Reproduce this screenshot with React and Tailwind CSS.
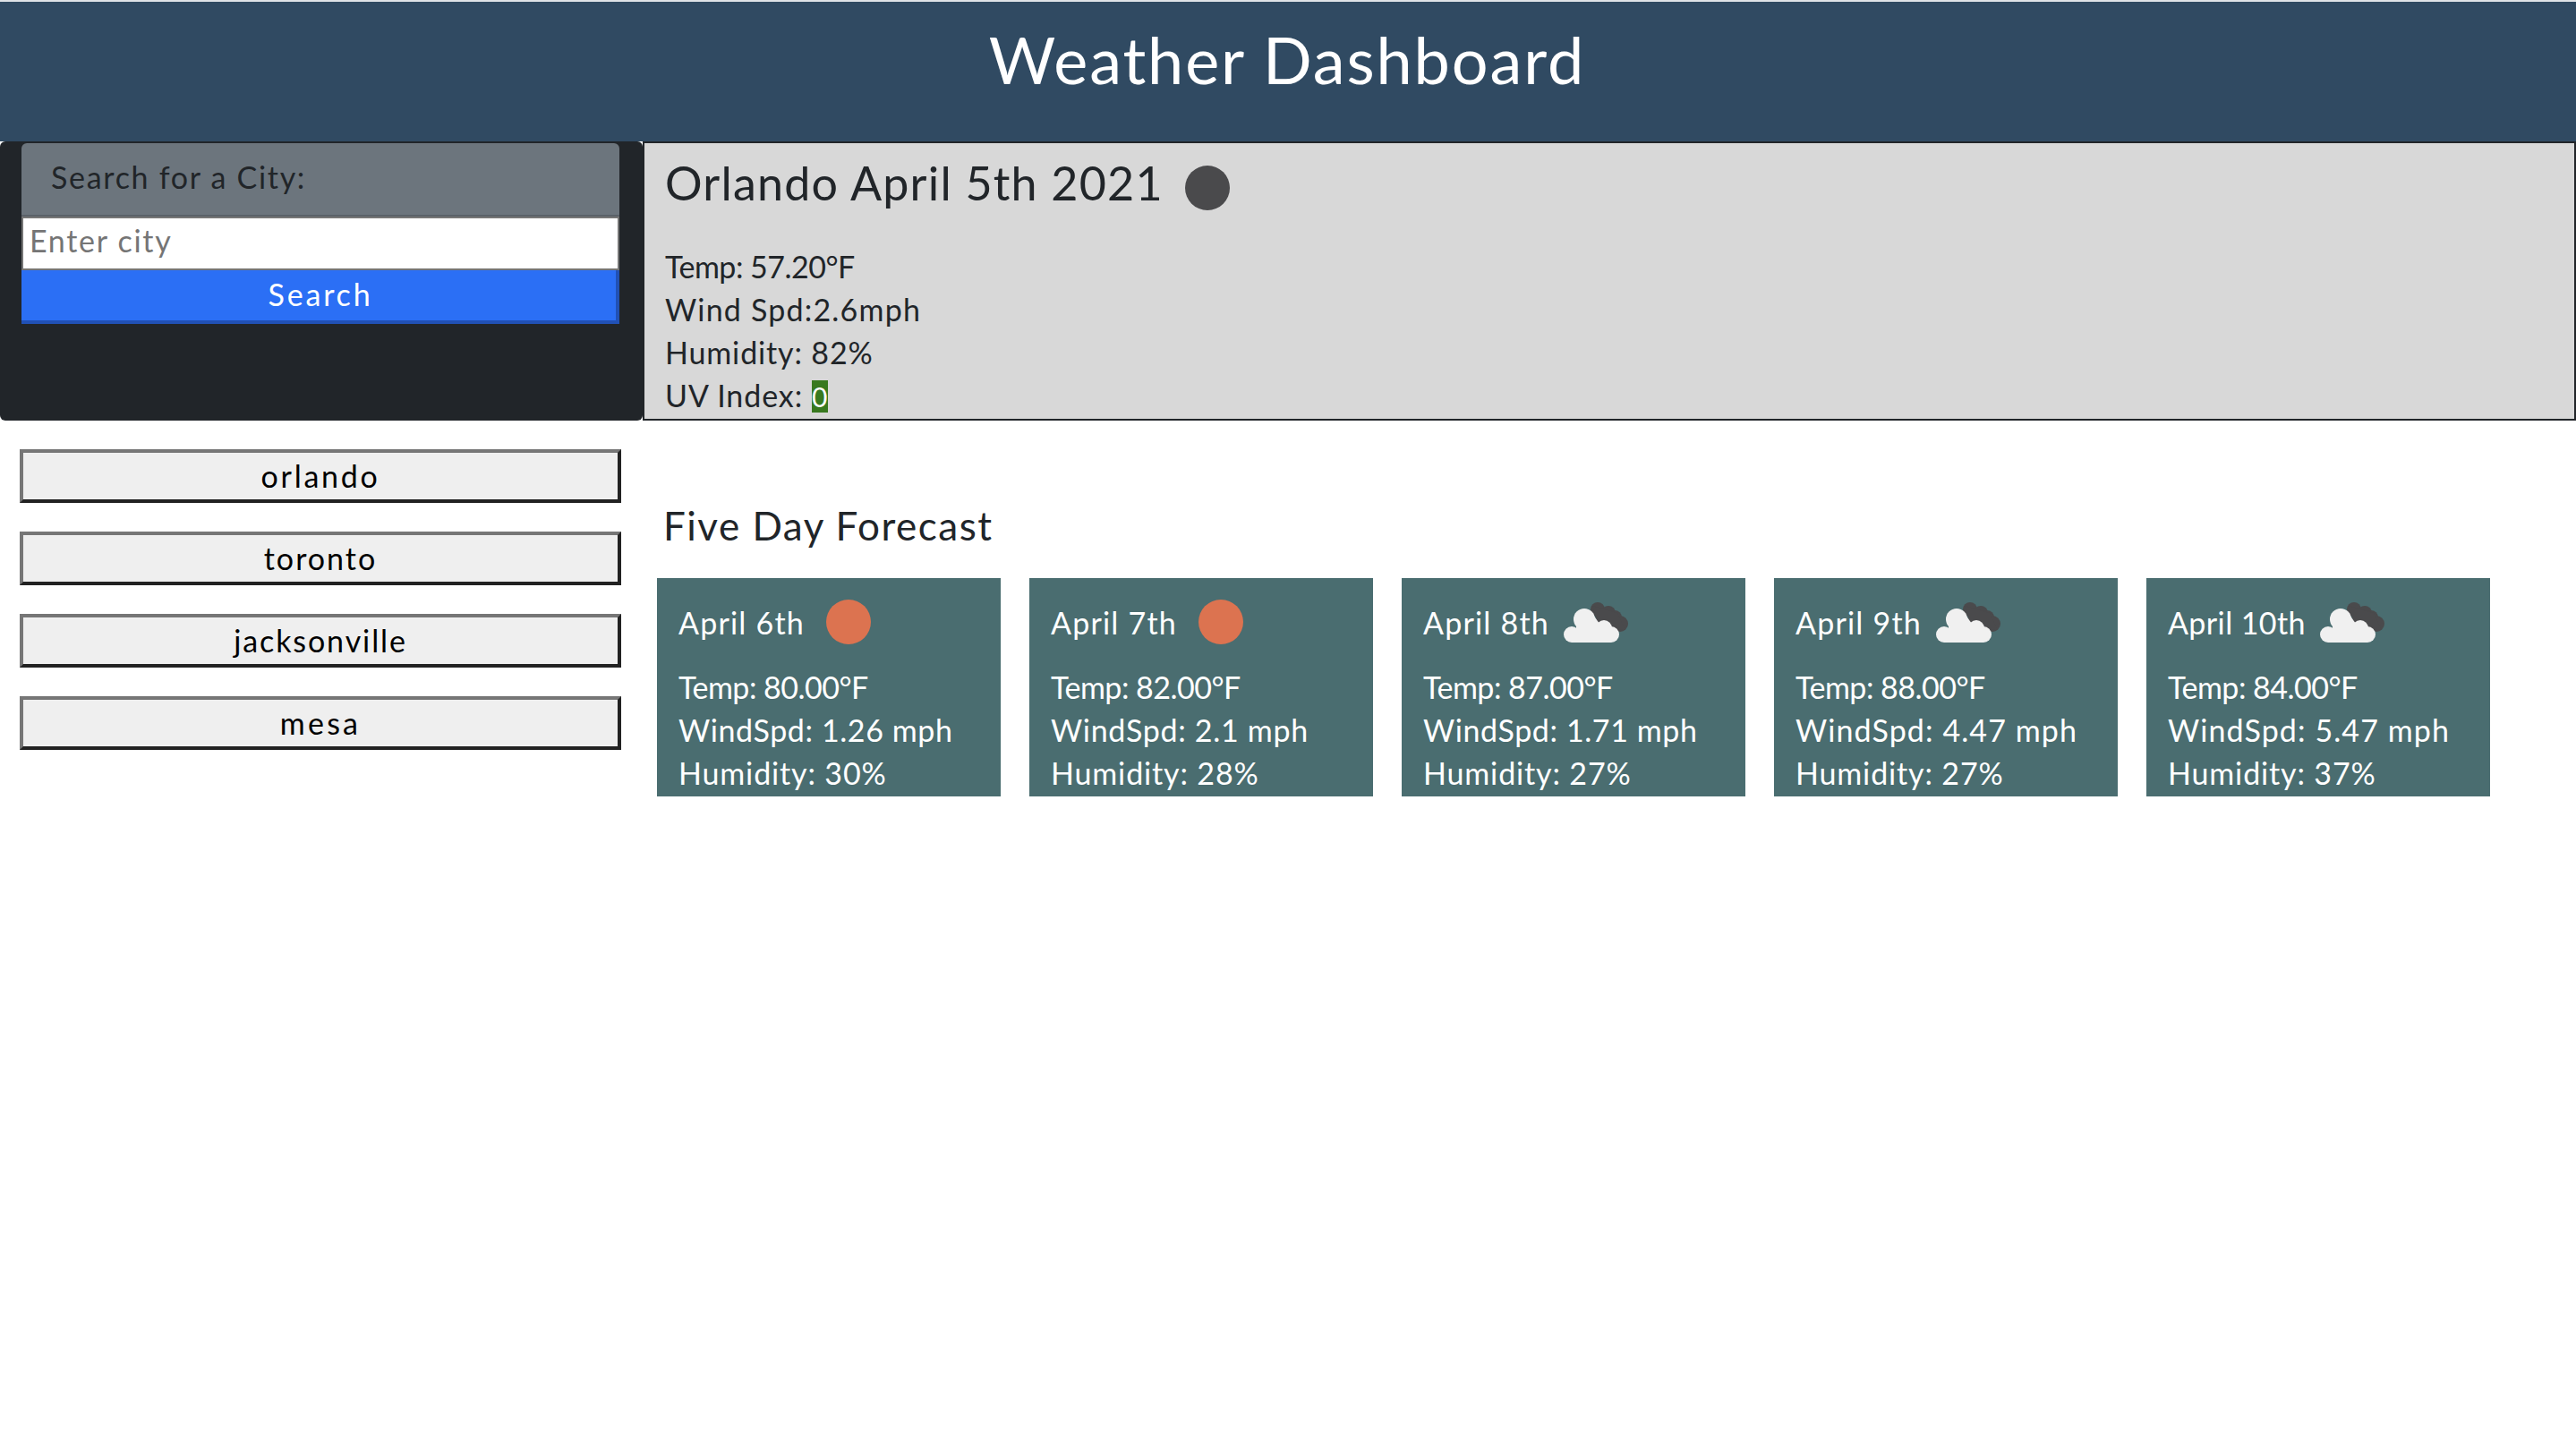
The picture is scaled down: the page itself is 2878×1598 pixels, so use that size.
import React from 'react'

const font = { fontFamily: 'Lato, "Noto Sans", sans-serif' }

const cities = [
  { name: 'orlando', spacing: 'tracking-[2.7px]' },
  { name: 'toronto', spacing: 'tracking-[2px]' },
  { name: 'jacksonville', spacing: 'tracking-[1.9px]' },
  { name: 'mesa', spacing: 'tracking-[3.2px]' },
]

const forecast = [
  { date: 'April 6th', dateSpacing: 'tracking-[1.2px]', windSpacing: 'tracking-[0.6px]', icon: 'sun', temp: '80.00', wind: '1.26', humidity: '30' },
  { date: 'April 7th', dateSpacing: 'tracking-[1.2px]', windSpacing: 'tracking-[0.7px]', icon: 'sun', temp: '82.00', wind: '2.1', humidity: '28' },
  { date: 'April 8th', dateSpacing: 'tracking-[1.2px]', windSpacing: 'tracking-[0.6px]', icon: 'cloud', temp: '87.00', wind: '1.71', humidity: '27' },
  { date: 'April 9th', dateSpacing: 'tracking-[1.2px]', windSpacing: 'tracking-[1.1px]', icon: 'cloud', temp: '88.00', wind: '4.47', humidity: '27' },
  { date: 'April 10th', dateSpacing: 'tracking-[0.4px]', windSpacing: 'tracking-[1.1px]', icon: 'cloud', temp: '84.00', wind: '5.47', humidity: '37' },
]

function CloudIcon() {
  return (
    <svg width="72" height="46" viewBox="0 0 72 46" className="ml-4 mt-[2px]">
      <g fill="#4a4a4c">
        <circle cx="38" cy="8" r="8" />
        <circle cx="50" cy="12" r="8" />
        <circle cx="57" cy="17" r="8" />
        <circle cx="63" cy="24" r="9" />
        <polygon points="32,4 60,12 68,30 40,32" />
      </g>
      <g fill="#f0f0f0">
        <circle cx="23" cy="19" r="12" />
        <circle cx="45" cy="29" r="9" />
        <circle cx="9" cy="36" r="9" />
        <circle cx="53" cy="36" r="9" />
        <polygon points="14,24 33,14 40,24 40,40 14,40" />
        <rect x="9" y="30" width="44" height="15" />
      </g>
    </svg>
  )
}

function ForecastCard({ day }) {
  return (
    <div className="w-[384px] h-[244px] bg-[#4a6d70] text-white px-6 pt-[22px] overflow-hidden">
      <div className={'flex items-center h-[54px] text-[34px] ' + day.dateSpacing}>
        <span>{day.date}</span>
        {day.icon === 'sun' ? (
          <div className="ml-6 w-[50px] h-[50px] rounded-full bg-[#dc7350]"></div>
        ) : (
          <CloudIcon />
        )}
      </div>
      <div className="mt-[22px] text-[34px] leading-[48px]">
        <div className="tracking-[-0.5px]">Temp: {day.temp}°F</div>
        <div className={day.windSpacing}>WindSpd: {day.wind} mph</div>
        <div className="tracking-[0.85px]">Humidity: {day.humidity}%</div>
      </div>
    </div>
  )
}

export default function App() {
  return (
    <div className="min-h-screen bg-white text-[#212529]" style={font}>
      <div className="h-[158px] bg-[#304a62] border-t-2 border-[#dfe3e7] flex items-center justify-center pb-[28px] pr-[2px]">
        <h1 className="text-[72px] text-white font-normal tracking-[1.9px]">Weather Dashboard</h1>
      </div>

      <div className="flex">
        <div className="w-[718px] shrink-0">
          <div className="h-[312px] bg-[#212529] rounded-[6px] pl-6 pr-[26px] pt-[2px]">
            <div className="h-[82px] bg-[#6c757d] rounded-t-[6px] border-b-2 border-[#5a6168] pl-[33px] pb-[6px] flex items-center text-[34px] tracking-[1.7px]">
              Search for a City:
            </div>
            <input
              placeholder="Enter city"
              className="block w-full h-[60px] bg-white border-2 border-[#767676] pl-[7px] pb-[7px] text-[34px] tracking-[1.7px] text-black placeholder:text-[#757575] outline-none"
            />
            <button className="block w-full h-[60px] bg-[#2b6ff5] text-white text-[34px] tracking-[2.8px] pl-[4px] pb-[3px] border-r-4 border-b-4 border-[#2151b5]">
              Search
            </button>
          </div>
          <div className="pt-8 pl-[22px] pr-6 flex flex-col gap-8">
            {cities.map((city) => (
              <button
                key={city.name}
                className={'h-[60px] bg-[#efefef] text-black text-[34px] pb-[4px] border-4 border-t-[#767676] border-l-[#767676] border-r-[#222222] border-b-[#222222] ' + city.spacing}
              >
                {city.name}
              </button>
            ))}
          </div>
        </div>

        <div className="flex-1 min-w-0">
          <div className="h-[312px] bg-[#d8d8d8] border-2 border-[#212529] pl-[23px] pt-[12px]">
            <div className="flex items-center h-[64px]">
              <h2 className="text-[52px] font-normal tracking-[1.2px]">Orlando April 5th 2021</h2>
              <div className="ml-6 mt-[11px] w-[50px] h-[50px] rounded-full bg-[#4a4a4c]"></div>
            </div>
            <div className="mt-[38px] text-[34px] leading-[48px]">
              <div className="tracking-[-0.5px]">Temp: 57.20°F</div>
              <div className="tracking-[1.2px]">Wind Spd:2.6mph</div>
              <div className="tracking-[0.85px]">Humidity: 82%</div>
              <div className="tracking-[0.9px]">
                UV Index: <span className="inline-block w-[18px] h-[36px] leading-[36px] text-center tracking-normal text-[30px] bg-[#38791f] text-white">0</span>
              </div>
            </div>
          </div>

          <div className="pl-4 pt-[86px]">
            <h3 className="pl-[7px] text-[44px] leading-[62px] font-normal tracking-[1.5px]">Five Day Forecast</h3>
            <div className="mt-[28px] flex gap-8">
              {forecast.map((day) => (
                <ForecastCard key={day.date} day={day} />
              ))}
            </div>
          </div>
        </div>
      </div>
    </div>
  )
}
